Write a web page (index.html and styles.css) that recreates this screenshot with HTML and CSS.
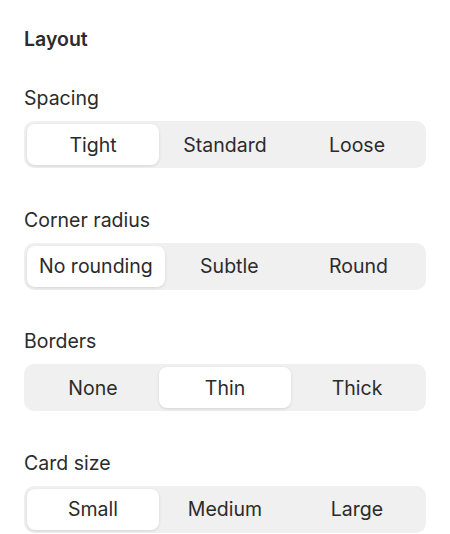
FILE: index.html
```html
<!DOCTYPE html>
<html lang="en">
<head>
  <meta charset="UTF-8">
  <meta name="viewport" content="width=device-width, initial-scale=1.0">
  <title>Layout Settings</title>
  <link rel="stylesheet" href="styles.css">
</head>
<body>

  <div class="panel">
    <h2>Layout</h2>

    <div class="setting">
      <div class="setting-label">Spacing</div>
      <div class="segmented">
        <button class="active">Tight</button>
        <button>Standard</button>
        <button>Loose</button>
      </div>
    </div>

    <div class="setting">
      <div class="setting-label">Corner radius</div>
      <div class="segmented">
        <button class="active">No rounding</button>
        <button>Subtle</button>
        <button>Round</button>
      </div>
    </div>

    <div class="setting">
      <div class="setting-label">Borders</div>
      <div class="segmented">
        <button>None</button>
        <button class="active">Thin</button>
        <button>Thick</button>
      </div>
    </div>

    <div class="setting">
      <div class="setting-label">Card size</div>
      <div class="segmented">
        <button class="active">Small</button>
        <button>Medium</button>
        <button>Large</button>
      </div>
    </div>
  </div>

</body>
</html>
```

FILE: styles.css
```css
/* General Styles */
body {
  font-family: 'Inter', 'Noto Sans', sans-serif;
  background-color: #fff;
  color: #2b2b2b;
  margin: 0;
  padding: 0;
}

.panel {
  padding: 28px 24px 0;
}

h2 {
  font-size: 19.5px;
  font-weight: 600;
  margin: 0 0 37px;
  line-height: 22px;
}

.setting {
  margin-bottom: 40.5px;
}

.setting:last-child {
  margin-bottom: 0;
}

.setting-label {
  font-size: 19.5px;
  line-height: 22px;
  margin-bottom: 12px;
}

/* Segmented control */
.segmented {
  display: flex;
  padding: 3px;
  background-color: #f0f0f0;
  border-radius: 10px;
}

.segmented button {
  flex: 1;
  height: 41px;
  padding: 0 12px;
  border: none;
  border-radius: 8px;
  background: transparent;
  font-family: inherit;
  font-size: 19.5px;
  color: #2b2b2b;
  cursor: pointer;
  white-space: nowrap;
}

.segmented button.active {
  background-color: #fff;
  box-shadow: 0 1px 3px rgba(0, 0, 0, 0.12);
}
```
